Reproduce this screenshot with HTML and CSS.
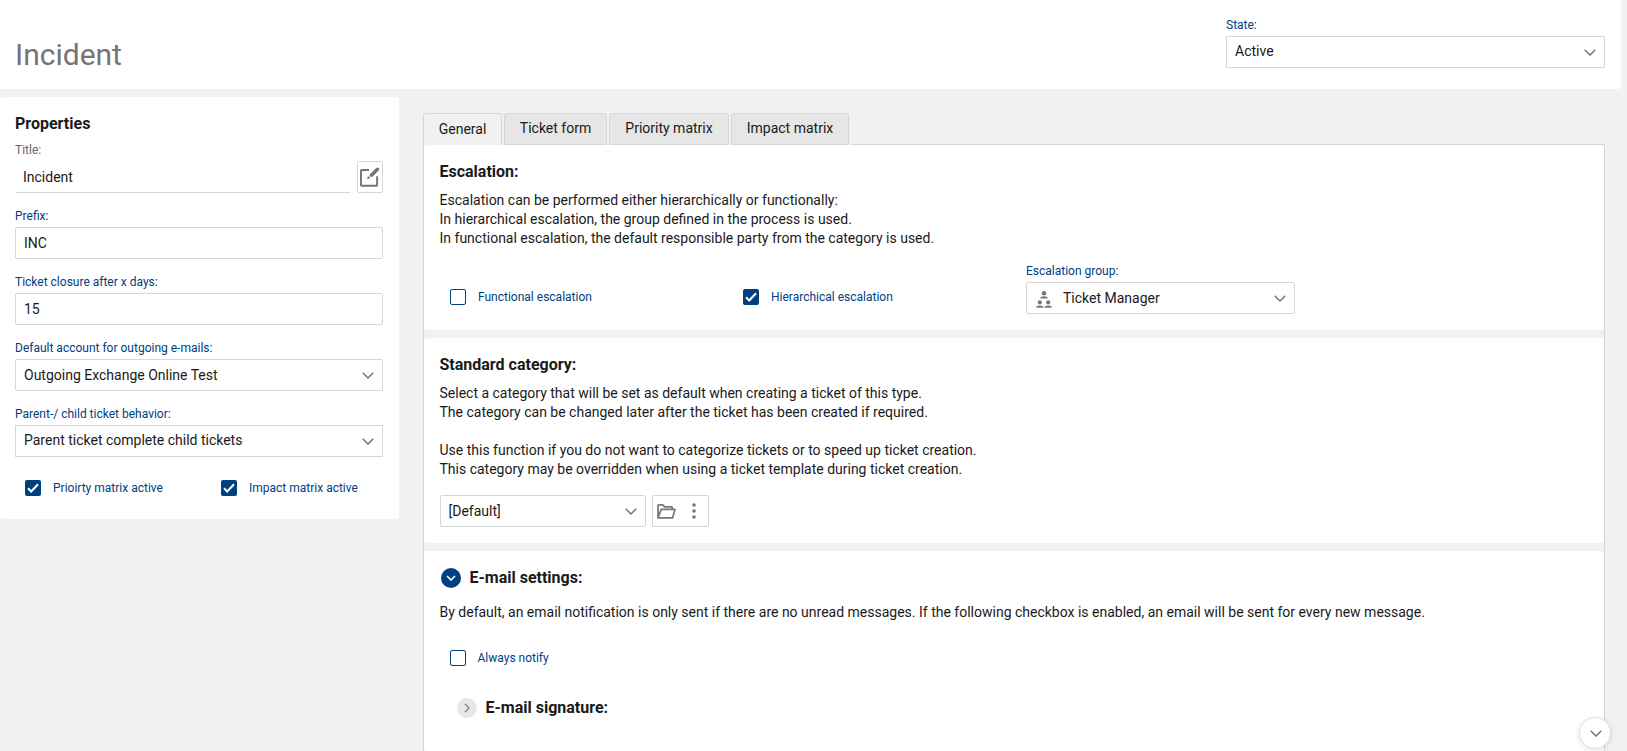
FILE: index.html
```html
<!DOCTYPE html>
<html lang="en">
<head>
    <meta charset="UTF-8">
    <meta name="viewport" content="width=device-width, initial-scale=1.0">
    <title>Incident</title>
    <link rel="stylesheet" href="styles.css">
</head>
<body>
    <header class="page-header">
        <h1>Incident</h1>
        <div class="field state-field">
            <label>State:</label>
            <div class="box square"><span>Active</span><svg class="chevron" viewBox="0 0 12 7"><path d="M.7.7 6 6 11.3.7"/></svg></div>
        </div>
    </header>

    <div class="layout">
        <aside class="properties">
            <h2>Properties</h2>
            <div class="field">
                <label class="muted">Title:</label>
                <div class="title-row">
                    <div class="title-value">Incident</div>
                    <button class="edit-btn">
                        <svg width="20" height="20" viewBox="0 0 20 20">
                            <path d="M9 3H1.9q-.9 0-.9.9v14q0 .9.9.9h14.3q.9 0 .9-.9V9.2" fill="none" stroke="#757575" stroke-width="1.9"/>
                            <path d="m11.4 8.3 6-6" stroke="#757575" stroke-width="3.4" stroke-linecap="round" fill="none"/>
                            <path d="m7.2 11.9.7-3.1 2.5 2.4z" fill="#757575"/>
                        </svg>
                    </button>
                </div>
            </div>
            <div class="field">
                <label>Prefix:</label>
                <div class="box"><span>INC</span></div>
            </div>
            <div class="field">
                <label>Ticket closure after x days:</label>
                <div class="box"><span>15</span></div>
            </div>
            <div class="field">
                <label>Default account for outgoing e-mails:</label>
                <div class="box"><span>Outgoing Exchange Online Test</span><svg class="chevron" viewBox="0 0 12 7"><path d="M.7.7 6 6 11.3.7"/></svg></div>
            </div>
            <div class="field">
                <label>Parent-/ child ticket behavior:</label>
                <div class="box square"><span>Parent ticket complete child tickets</span><svg class="chevron" viewBox="0 0 12 7"><path d="M.7.7 6 6 11.3.7"/></svg></div>
            </div>
            <div class="check-row">
                <div class="check"><i class="tick on"><svg viewBox="0 0 16 16"><path d="m3 8.3 3.2 3.2L13 4.2"/></svg></i>Prioirty matrix active</div>
                <div class="check"><i class="tick on"><svg viewBox="0 0 16 16"><path d="m3 8.3 3.2 3.2L13 4.2"/></svg></i>Impact matrix active</div>
            </div>
        </aside>

        <main class="content">
            <nav class="tabs">
                <div class="tab active">General</div>
                <div class="tab tab-form">Ticket form</div>
                <div class="tab tab-priority">Priority matrix</div>
                <div class="tab tab-impact">Impact matrix</div>
                <div class="tab-line"></div>
            </nav>
            <div class="panels">
                <section class="panel escalation">
                    <h2>Escalation:</h2>
                    <p>Escalation can be performed either hierarchically or functionally:<br>
                    In hierarchical escalation, the group defined in the process is used.<br>
                    In functional escalation, the default responsible party from the category is used.</p>
                    <div class="escalation-row">
                        <div class="check"><i class="tick"></i>Functional escalation</div>
                        <div class="check"><i class="tick on"><svg viewBox="0 0 16 16"><path d="m3 8.3 3.2 3.2L13 4.2"/></svg></i>Hierarchical escalation</div>
                        <div class="field">
                            <label>Escalation group:</label>
                            <div class="box">
                                <svg class="group-icon" width="16" height="17" viewBox="0 0 16 17">
                                    <circle cx="8" cy="2.3" r="2.2"/><path d="M4.2 7.6q.4-2.4 3.8-2.4t3.8 2.4z"/>
                                    <circle cx="3.8" cy="11.4" r="2.1"/><path d="M0 16.8q.4-2.4 3.8-2.4t3.8 2.4z"/>
                                    <circle cx="12.2" cy="11.4" r="2.1"/><path d="M8.4 16.8q.4-2.4 3.8-2.4t3.8 2.4z"/>
                                </svg>
                                <span>Ticket Manager</span><svg class="chevron" viewBox="0 0 12 7"><path d="M.7.7 6 6 11.3.7"/></svg>
                            </div>
                        </div>
                    </div>
                </section>

                <section class="panel category">
                    <h2>Standard category:</h2>
                    <p>Select a category that will be set as default when creating a ticket of this type.<br>
                    The category can be changed later after the ticket has been created if required.<br>
                    <br>
                    Use this function if you do not want to categorize tickets or to speed up ticket creation.<br>
                    This category may be overridden when using a ticket template during ticket creation.</p>
                    <div class="category-row">
                        <div class="box category-select"><span>[Default]</span><svg class="chevron" viewBox="0 0 12 7"><path d="M.7.7 6 6 11.3.7"/></svg></div>
                        <div class="box actions">
                            <svg width="19" height="15" viewBox="0 0 19 15" fill="none" stroke="#757575" stroke-width="1.7" stroke-linejoin="round"><path d="M1 13.9V1.7q0-.8.8-.8h4l1.8 2h6.9q.8 0 .8.8v1.7M1 13.9l3.2-8.5h13.8l-2.5 8.5z"/></svg>
                            <svg width="4" height="16" viewBox="0 0 4 16" fill="#757575"><circle cx="2" cy="2" r="1.8"/><circle cx="2" cy="8" r="1.8"/><circle cx="2" cy="14" r="1.8"/></svg>
                        </div>
                    </div>
                </section>

                <section class="panel email">
                    <div class="toggle-head">
                        <i class="round open"><svg width="10" height="6" viewBox="0 0 10 6"><path d="m1 1 4 4 4-4"/></svg></i>
                        <h2>E-mail settings:</h2>
                    </div>
                    <p>By default, an email notification is only sent if there are no unread messages. If the following checkbox is enabled, an email will be sent for every new message.</p>
                    <div class="check"><i class="tick"></i>Always notify</div>
                    <div class="toggle-head signature">
                        <i class="round"><svg width="6" height="10" viewBox="0 0 6 10"><path d="m1 .8 4 4.2-4 4.2"/></svg></i>
                        <h2>E-mail signature:</h2>
                    </div>
                </section>
            </div>
        </main>
    </div>

    <button class="scroll-btn"><svg class="chevron" viewBox="0 0 12 7"><path d="M.7.7 6 6 11.3.7"/></svg></button>
</body>
</html>
```
FILE: styles.css
```css
* {
    margin: 0;
    padding: 0;
    box-sizing: border-box;
}

body {
    height: 751px;
    overflow: hidden;
    font-family: Roboto, Arial, sans-serif;
    font-size: 14px;
    background-color: #f1f1f1;
    color: #1a1a1a;
}

h2 {
    font-size: 16px;
    line-height: 20px;
    font-weight: 700;
}

p {
    line-height: 19px;
}

svg {
    display: block;
    flex: none;
}

.page-header {
    display: flex;
    justify-content: space-between;
    width: 1621px;
    height: 89px;
    padding: 17px 16px 0 15px;
    background-color: #fff;
    border-radius: 0 0 3px 3px;
}

.page-header h1 {
    padding-top: 20px;
    font-size: 30px;
    line-height: 36px;
    font-weight: 400;
    color: #757575;
}

.state-field {
    width: 379px;
}

.layout {
    display: flex;
    align-items: flex-start;
    gap: 24px;
    padding-top: 8px;
}

/* fields */
.field label {
    display: block;
    height: 19px;
    font-size: 12px;
    line-height: 16px;
    color: #004080;
}

.field label.muted {
    color: #666;
}

.box {
    display: flex;
    align-items: center;
    justify-content: space-between;
    height: 32px;
    padding: 0 8px;
    border: 1px solid #d6d6d6;
    border-radius: 2px;
    background-color: #fff;
}

.square {
    border-radius: 0;
}

.square span {
    margin-top: -2px;
}

.chevron {
    width: 12px;
    height: 7px;
    fill: none;
    stroke: #757575;
    stroke-width: 1.5;
}

/* sidebar */
.properties {
    width: 399px;
    height: 422px;
    padding: 17px 16px 0 15px;
    background-color: #fff;
    border-radius: 3px;
}

.properties .field {
    height: 51px;
    margin-bottom: 15px;
}

.properties h2 {
    margin-bottom: 8px;
}

.title-row {
    display: flex;
    justify-content: space-between;
}

.title-value {
    width: 336px;
    height: 32px;
    padding-left: 8px;
    line-height: 32px;
    border-bottom: 1px solid #d6d6d6;
    border-radius: 2px;
}

.edit-btn {
    display: flex;
    align-items: center;
    padding-left: 2px;
    width: 26px;
    height: 32px;
    border: 1px solid #d6d6d6;
    border-radius: 2px;
    background-color: #fff;
}

.check-row {
    display: grid;
    grid-template-columns: 196px 1fr;
    padding: 8px 0 0 10px;
}

.check {
    display: flex;
    align-items: center;
    gap: 12px;
    height: 16px;
    font-size: 12px;
    color: #004080;
}

.tick {
    width: 16px;
    height: 16px;
    border: 1px solid #004080;
    border-radius: 2px;
}

.tick.on {
    border: none;
    background-color: #004080;
}

.tick path {
    fill: none;
    stroke: #fff;
    stroke-width: 2;
}

/* tabs */
.content {
    width: 1182px;
    padding-top: 16px;
}

.tabs {
    display: flex;
    gap: 2px;
    height: 32px;
}

.tab {
    height: 32px;
    line-height: 28px;
    text-align: center;
    border: 1px solid #d6d6d6;
    border-radius: 3px 3px 0 0;
    background-color: #e6e6e6;
}

.tab.active {
    width: 79px;
    line-height: 30px;
    border-bottom: none;
    background-color: #f1f1f1;
}

.tab-form {
    width: 103px;
}

.tab-priority {
    width: 120px;
}

.tab-impact {
    width: 118px;
}

.tab-line {
    flex: 1;
    border-bottom: 1px solid #d6d6d6;
}

.panels {
    display: flex;
    flex-direction: column;
    gap: 8px;
    border: 1px solid #d6d6d6;
    border-width: 0 1px;
}

.panel {
    padding: 17px 16px 0 15.5px;
    background-color: #fff;
    border-radius: 3px;
}

.panel h2 + p {
    margin-top: 9px;
}

.escalation {
    height: 185px;
}

.escalation-row {
    display: grid;
    grid-template-columns: 293px 283px 269px;
    padding-left: 10.5px;
    margin-top: 15px;
}

.escalation-row .check {
    margin-top: 26px;
}

.escalation-row .box {
    gap: 11px;
    padding-left: 9px;
}

.escalation-row .box span {
    flex: 1;
}

.group-icon {
    margin-top: 2px;
    fill: #757575;
}

.category {
    height: 205px;
}

.category-row {
    display: flex;
    gap: 6px;
    margin: 16px 0 0 .5px;
}

.category-select {
    width: 206px;
    padding-left: 7.5px;
}

.actions {
    width: 57px;
    padding: 0 12px 0 4px;
}

.email {
    height: 200px;
}

.toggle-head {
    display: flex;
    align-items: center;
    gap: 8.5px;
    padding-left: 1.5px;
}

.round {
    display: flex;
    align-items: center;
    justify-content: center;
    width: 20px;
    height: 20px;
    border-radius: 50%;
    background-color: #e6e6e6;
}

.round path {
    fill: none;
    stroke: #757575;
    stroke-width: 1.2;
}

.round.open {
    background-color: #004080;
}

.round.open path {
    stroke: #fff;
    stroke-width: 1.6;
}

.email p {
    margin-top: 15px;
}

.email .check {
    margin: 28px 0 0 10.5px;
    gap: 11.5px;
}

.signature {
    margin: 32px 0 0 16px;
}

.scroll-btn {
    position: fixed;
    right: 16px;
    bottom: 2px;
    display: flex;
    align-items: center;
    justify-content: center;
    width: 32px;
    height: 32px;
    padding-left: 2px;
    border: 1px solid #e0e0e0;
    border-radius: 50%;
    background-color: #fff;
    box-shadow: 0 1px 5px rgba(0, 0, 0, 0.12);
}
```
